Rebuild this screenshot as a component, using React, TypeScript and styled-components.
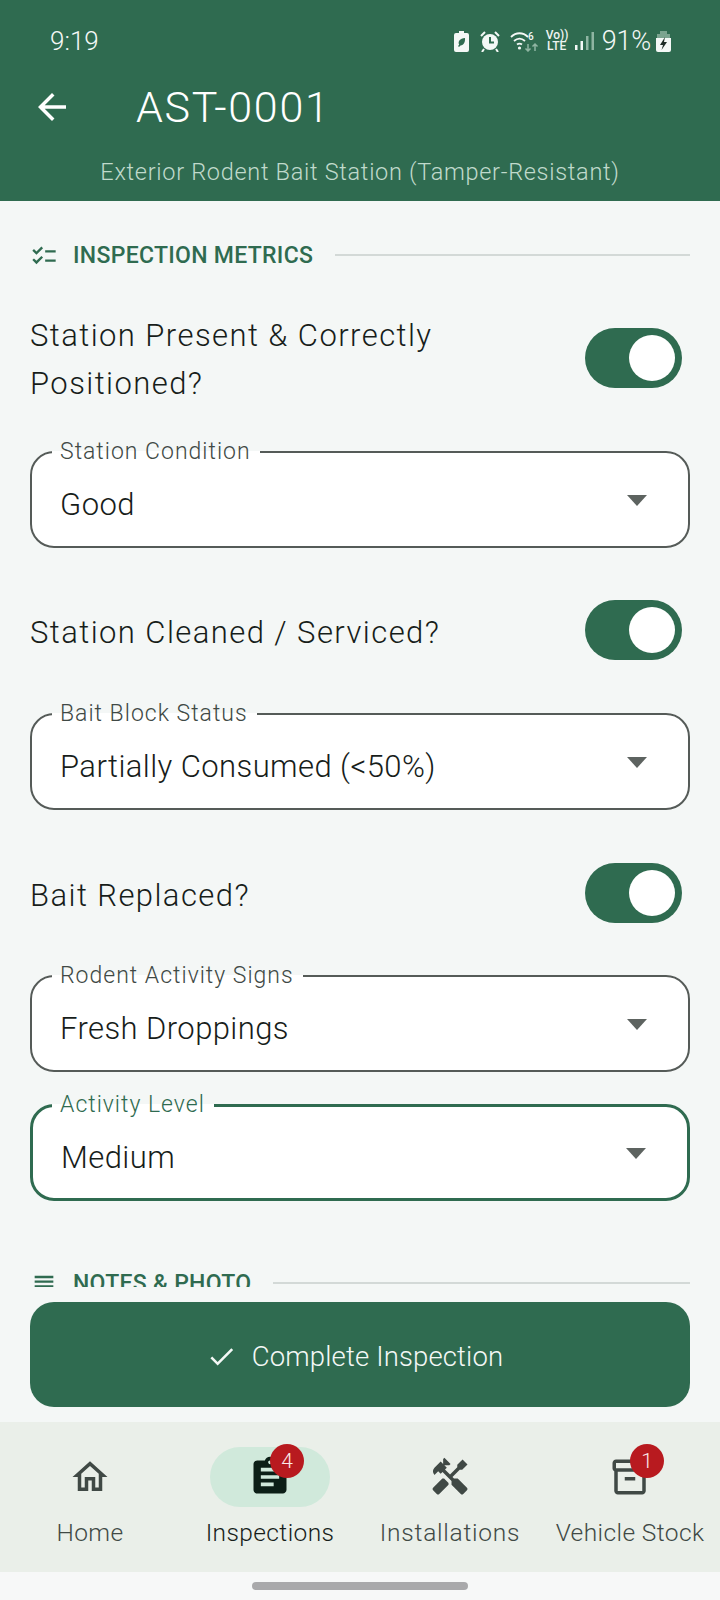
import React from "react";
import styled, { createGlobalStyle } from "styled-components";
import {
  MdArrowBack,
  MdAssignment,
  MdCheck,
  MdChecklist,
  MdHandyman,
  MdOutlineHome,
  MdOutlineInventory2,
  MdOutlineSubject,
} from "react-icons/md";

const Global = createGlobalStyle`
  html, body { margin: 0; padding: 0; background: #f4f7f6; }
  * { box-sizing: border-box; }
  body { font-family: Roboto, "Noto Sans", sans-serif; }
`;

const Screen = styled.div`
  width: 720px;
  height: 1600px;
  display: flex;
  flex-direction: column;
  overflow: hidden;
  background: #f4f7f6;
`;

const Header = styled.header`
  height: 201px;
  background: #2f6b50;
  color: #fff;
  display: flex;
  flex-direction: column;
`;

const StatusBar = styled.div`
  height: 82px;
  padding: 0 49px 0 50px;
  display: flex;
  align-items: center;
  justify-content: space-between;
`;

const Time = styled.span`
  font-size: 26px;
  font-weight: 300;
  color: #f4f8f6;
`;

const StatusIcons = styled.div`
  display: flex;
  align-items: center;
  height: 22px;
`;

const StatusIcon = styled.svg<{ $gap?: number }>`
  display: block;
  margin-right: ${(p) => p.$gap ?? 0}px;
`;

const VoLte = styled.span`
  width: 22px;
  margin: 0 7px 0 7px;
  font-size: 12px;
  line-height: 11px;
  font-weight: 500;
  color: #eef4f1;
  text-align: center;
  white-space: nowrap;
`;

const Percent = styled.span`
  font-size: 27px;
  font-weight: 300;
  letter-spacing: -0.2px;
  margin: 0 5px 0 8px;
  color: #f4f8f6;
`;

const TitleRow = styled.div`
  height: 50px;
  display: flex;
  align-items: center;
  padding-left: 31px;
`;

const BackButton = styled.span`
  width: 105px;
  display: flex;
  font-size: 42px;
`;

const Title = styled.h1`
  margin: 0;
  font-size: 43px;
  line-height: 50px;
  font-weight: 300;
  letter-spacing: 1.7px;
`;

const Subtitle = styled.div`
  margin-top: 25px;
  text-align: center;
  font-size: 23.5px;
  line-height: 30px;
  font-weight: 300;
  letter-spacing: 0.7px;
  color: #c0dacc;
`;

const Body = styled.main`
  flex: 1;
  min-height: 0;
  overflow: hidden;
  padding: 0 30px;
`;

const Section = styled.div<{ $top: number }>`
  height: 30px;
  margin-top: ${(p) => p.$top}px;
  display: flex;
  align-items: center;
  color: #2f6b50;
  & > svg {
    font-size: 28px;
    flex-shrink: 0;
  }
`;

const SectionTitle = styled.span`
  margin-left: 15px;
  font-size: 23px;
  line-height: 30px;
  font-weight: 500;
  letter-spacing: 0.3px;
  white-space: nowrap;
`;

const SectionRule = styled.span`
  flex: 1;
  height: 2px;
  margin: -2px 0 0 22px;
  background: #d3d9d7;
`;

const ToggleRow = styled.div<{ $top: number }>`
  margin-top: ${(p) => p.$top}px;
  padding-right: 8px;
  display: flex;
  align-items: center;
  justify-content: space-between;
`;

const ToggleLabel = styled.div`
  width: 480px;
  padding-top: 5px;
  font-size: 31px;
  line-height: 48px;
  font-weight: 300;
  letter-spacing: 1.43px;
  color: #171d1a;
`;

const Toggle = styled.span`
  width: 97px;
  height: 60px;
  padding-right: 7px;
  border-radius: 30px;
  background: #2f6b50;
  display: flex;
  align-items: center;
  justify-content: flex-end;
  flex-shrink: 0;
`;

const Knob = styled.span`
  width: 46px;
  height: 46px;
  border-radius: 50%;
  background: #fff;
`;

const Field = styled.fieldset<{ $top: number; $focus?: boolean }>`
  margin: ${(p) => p.$top}px 0 0;
  height: 110px;
  padding: 0;
  min-width: 0;
  background: #fff;
  border: ${(p) => (p.$focus ? "3px solid #2f6b50" : "2px solid #555b58")};
  border-radius: 24px;
`;

const Legend = styled.legend<{ $focus?: boolean }>`
  margin-left: ${(p) => (p.$focus ? 19 : 20)}px;
  padding: 0 9px 0 8px;
  font-size: 23px;
  line-height: 28px;
  font-weight: 300;
  letter-spacing: 1px;
  color: ${(p) => (p.$focus ? "#2f6b50" : "#404945")};
`;

const FieldRow = styled.div`
  height: 77px;
  padding: 0 41px 0 28px;
  display: flex;
  align-items: center;
  justify-content: space-between;
`;

const FieldValue = styled.span`
  font-size: 31px;
  line-height: 40px;
  font-weight: 300;
  letter-spacing: 0.42px;
  color: #171d1a;
`;

const Caret = styled.span`
  width: 0;
  height: 0;
  margin-top: -9px;
  border-left: 10px solid transparent;
  border-right: 10px solid transparent;
  border-top: 11px solid #5d6360;
`;

const Footer = styled.div`
  height: 135px;
  padding: 15px 30px;
  background: #f4f7f6;
`;

const CompleteButton = styled.button`
  width: 100%;
  height: 105px;
  padding: 3px 11px 0 0;
  border: 0;
  border-radius: 24px;
  background: #2f6b50;
  color: #f4f8f6;
  display: flex;
  align-items: center;
  justify-content: center;
  gap: 15px;
  font-family: inherit;
  font-size: 27.5px;
  font-weight: 300;
  letter-spacing: 0.15px;
  & > svg {
    font-size: 31px;
  }
`;

const Nav = styled.nav`
  height: 150px;
  background: #eaefe9;
  display: grid;
  grid-template-columns: repeat(4, 1fr);
`;

const NavItem = styled.div<{ $active?: boolean }>`
  display: flex;
  flex-direction: column;
  align-items: center;
  padding-top: 25px;
  color: ${(p) => (p.$active ? "#171d1a" : "#404945")};
`;

const IconPill = styled.span<{ $active?: boolean }>`
  position: relative;
  width: 120px;
  height: 60px;
  border-radius: 30px;
  background: ${(p) => (p.$active ? "#d0e9db" : "transparent")};
  color: ${(p) => (p.$active ? "#0c1f17" : "#404945")};
  display: flex;
  align-items: center;
  justify-content: center;
  font-size: ${(p) => (p.$active ? 44 : 42)}px;
`;

const MirroredIcon = styled(MdHandyman)`
  transform: scaleX(-1);
`;

const Badge = styled.span`
  position: absolute;
  left: 60px;
  top: -3px;
  width: 34px;
  height: 34px;
  border-radius: 50%;
  background: #b81a1f;
  color: #fbeaea;
  font-size: 21px;
  font-weight: 300;
  display: flex;
  align-items: center;
  justify-content: center;
`;

const NavLabel = styled.span<{ $spacing?: number }>`
  margin-top: 11px;
  font-size: 24.5px;
  line-height: 30px;
  font-weight: 300;
  letter-spacing: ${(p) => p.$spacing ?? 0.4}px;
  white-space: nowrap;
`;

const HomeArea = styled.div`
  height: 28px;
  flex-shrink: 0;
  background: #f7f8f8;
  display: flex;
  justify-content: center;
  padding-top: 10px;
`;

const HomeBar = styled.span`
  width: 216px;
  height: 8px;
  border-radius: 4px;
  background: #a9a9ab;
`;

const SelectField = ({ label, value, top, focus }: { label: string; value: string; top: number; focus?: boolean }) => (
  <Field $top={top} $focus={focus}>
    <Legend $focus={focus}>{label}</Legend>
    <FieldRow>
      <FieldValue>{value}</FieldValue>
      <Caret />
    </FieldRow>
  </Field>
);

const ToggleLine = ({ label, top }: { label: React.ReactNode; top: number }) => (
  <ToggleRow $top={top}>
    <ToggleLabel>{label}</ToggleLabel>
    <Toggle>
      <Knob />
    </Toggle>
  </ToggleRow>
);

const Tab = ({
  label,
  icon,
  badge,
  active,
  spacing,
}: {
  label: string;
  icon: React.ReactNode;
  badge?: string;
  active?: boolean;
  spacing?: number;
}) => (
  <NavItem $active={active}>
    <IconPill $active={active}>
      {icon}
      {badge && <Badge>{badge}</Badge>}
    </IconPill>
    <NavLabel $spacing={spacing}>{label}</NavLabel>
  </NavItem>
);

export default function App() {
  return (
    <Screen>
      <Global />
      <Header>
        <StatusBar>
          <Time>9:19</Time>
          <StatusIcons>
            <StatusIcon width="15" height="21" viewBox="0 0 15 21" $gap={11}>
              <path fill="#f4f8f6" d="M5 0h5v2h3a2 2 0 0 1 2 2v15a2 2 0 0 1-2 2H2a2 2 0 0 1-2-2V4a2 2 0 0 1 2-2h3z" />
              <path fill="#2f6b50" d="M11 7c.3 4-1 7-4.500 7.500L5 16l-1-1 1.200-1.200C3.500 10.500 6 7.500 11 7z" />
            </StatusIcon>
            <StatusIcon width="20" height="21" viewBox="0 0 20 21" $gap={10}>
              <circle cx="10" cy="11" r="8" fill="#f4f8f6" />
              <path d="M10 6v5.500h4" stroke="#2f6b50" strokeWidth="2" fill="none" />
              <path d="M1 5l4-4M19 5l-4-4M4 18l-2 3M16 18l2 3" stroke="#f4f8f6" strokeWidth="2" />
            </StatusIcon>
            <StatusIcon width="29" height="22" viewBox="0 0 29 22">
              <path d="M1 7c5-5 12-5 17 0M4 11c3.500-3 7.500-3 11 0M7 14.500c2-1.500 3-1.500 5 0" stroke="#f4f8f6" strokeWidth="1.800" fill="none" />
              <circle cx="9.500" cy="18" r="1.600" fill="#f4f8f6" />
              <text x="18" y="10" fontSize="10" fontWeight="500" fill="#f4f8f6" fontFamily="Roboto, sans-serif">6</text>
              <path d="M18 14v7M15.500 18.500l2.500 2.500 2.500-2.500M25 21v-7M22.500 16.500l2.500-2.500 2.500 2.500" stroke="#8fb5a2" strokeWidth="1.500" fill="none" />
            </StatusIcon>
            <VoLte>
              Vo))
              <br />
              LTE
            </VoLte>
            <StatusIcon width="19" height="20" viewBox="0 0 19 20">
              <rect x="0" y="14" width="2.500" height="5" fill="#f4f8f6" />
              <rect x="5.500" y="10" width="2.500" height="9" fill="#f4f8f6" />
              <rect x="11" y="5" width="2.500" height="14" fill="#8fb5a2" />
              <rect x="16.500" y="1" width="2.500" height="18" fill="#8fb5a2" />
            </StatusIcon>
            <Percent>91%</Percent>
            <StatusIcon width="15" height="21" viewBox="0 0 15 21">
              <path fill="#7ba48f" d="M4 0h7v3H4zM1 3h13v5H1z" />
              <path fill="#f4f8f6" d="M0 7h15v12a2 2 0 0 1-2 2H2a2 2 0 0 1-2-2z" />
              <path fill="#1c2a24" d="M9 6L4 14h3l-1.500 5L11 11H8z" />
            </StatusIcon>
          </StatusIcons>
        </StatusBar>
        <TitleRow>
          <BackButton>
            <MdArrowBack />
          </BackButton>
          <Title>AST-0001</Title>
        </TitleRow>
        <Subtitle>Exterior Rodent Bait Station (Tamper-Resistant)</Subtitle>
      </Header>
      <Body>
        <Section $top={40}>
          <MdChecklist />
          <SectionTitle>INSPECTION METRICS</SectionTitle>
          <SectionRule />
        </Section>
        <ToggleLine
          top={36}
          label={
            <>
              Station Present &amp; Correctly
              <br />
              Positioned?
            </>
          }
        />
        <SelectField top={30} label="Station Condition" value="Good" />
        <ToggleLine top={52} label="Station Cleaned / Serviced?" />
        <SelectField top={40} label="Bait Block Status" value="Partially Consumed (<50%)" />
        <ToggleLine top={53} label="Bait Replaced?" />
        <SelectField top={39} label="Rodent Activity Signs" value="Fresh Droppings" />
        <SelectField top={19} focus label="Activity Level" value="Medium" />
        <Section $top={68}>
          <MdOutlineSubject />
          <SectionTitle>NOTES &amp; PHOTO</SectionTitle>
          <SectionRule />
        </Section>
      </Body>
      <Footer>
        <CompleteButton>
          <MdCheck />
          Complete Inspection
        </CompleteButton>
      </Footer>
      <Nav>
        <Tab label="Home" icon={<MdOutlineHome />} />
        <Tab active label="Inspections" icon={<MdAssignment />} badge="4" />
        <Tab label="Installations" icon={<MirroredIcon />} spacing={0.75} />
        <Tab label="Vehicle Stock" icon={<MdOutlineInventory2 />} badge="1" />
      </Nav>
      <HomeArea>
        <HomeBar />
      </HomeArea>
    </Screen>
  );
}
